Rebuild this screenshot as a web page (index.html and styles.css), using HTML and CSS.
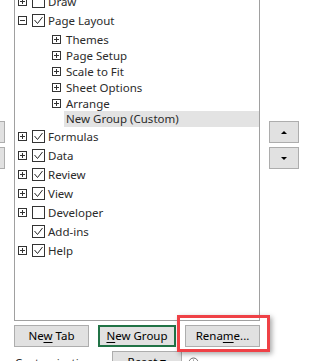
FILE: index.html
```html
<!DOCTYPE html>
<html lang="en">
<head>
  <meta charset="UTF-8">
  <meta name="viewport" content="width=device-width, initial-scale=1.0">
  <title>Customize the Ribbon</title>
  <link rel="stylesheet" href="styles.css">
</head>
<body>
  <div class="dialog">
    <div class="lists">
      <!-- Add / Remove buttons, mostly off-screen to the left -->
      <div class="move-buttons">
        <button class="btn">Add &gt;&gt;</button>
        <button class="btn">&lt;&lt; Remove</button>
      </div>

      <div class="tree-panel">
        <ul class="tree">
          <li class="tab">
            <span class="toggle"></span>
            <span class="check"></span>
            <span class="label">Draw</span>
          </li>
          <li class="tab">
            <span class="toggle open"></span>
            <span class="check"><svg width="11" height="11" viewBox="0 0 11 11"><path d="M1.5 5l3 3.5 5-6.5" fill="none" stroke="#262626"/></svg></span>
            <span class="label">Page Layout</span>
          </li>
          <li class="group first">
            <span class="toggle"></span>
            <span class="label">Themes</span>
          </li>
          <li class="group">
            <span class="toggle"></span>
            <span class="label">Page Setup</span>
          </li>
          <li class="group">
            <span class="toggle"></span>
            <span class="label">Scale to Fit</span>
          </li>
          <li class="group">
            <span class="toggle"></span>
            <span class="label">Sheet Options</span>
          </li>
          <li class="group">
            <span class="toggle"></span>
            <span class="label">Arrange</span>
          </li>
          <li class="group custom">
            <span class="label">New Group (Custom)</span>
          </li>
          <li class="tab">
            <span class="toggle"></span>
            <span class="check"><svg width="11" height="11" viewBox="0 0 11 11"><path d="M1.5 5l3 3.5 5-6.5" fill="none" stroke="#262626"/></svg></span>
            <span class="label">Formulas</span>
          </li>
          <li class="tab">
            <span class="toggle"></span>
            <span class="check"><svg width="11" height="11" viewBox="0 0 11 11"><path d="M1.5 5l3 3.5 5-6.5" fill="none" stroke="#262626"/></svg></span>
            <span class="label">Data</span>
          </li>
          <li class="tab">
            <span class="toggle"></span>
            <span class="check"><svg width="11" height="11" viewBox="0 0 11 11"><path d="M1.5 5l3 3.5 5-6.5" fill="none" stroke="#262626"/></svg></span>
            <span class="label">Review</span>
          </li>
          <li class="tab">
            <span class="toggle"></span>
            <span class="check"><svg width="11" height="11" viewBox="0 0 11 11"><path d="M1.5 5l3 3.5 5-6.5" fill="none" stroke="#262626"/></svg></span>
            <span class="label">View</span>
          </li>
          <li class="tab">
            <span class="toggle"></span>
            <span class="check"></span>
            <span class="label">Developer</span>
          </li>
          <li class="tab">
            <span class="toggle none"></span>
            <span class="check"><svg width="11" height="11" viewBox="0 0 11 11"><path d="M1.5 5l3 3.5 5-6.5" fill="none" stroke="#262626"/></svg></span>
            <span class="label">Add-ins</span>
          </li>
          <li class="tab">
            <span class="toggle"></span>
            <span class="check"><svg width="11" height="11" viewBox="0 0 11 11"><path d="M1.5 5l3 3.5 5-6.5" fill="none" stroke="#262626"/></svg></span>
            <span class="label">Help</span>
          </li>
        </ul>
      </div>

      <div class="order-buttons">
        <button class="btn btn-icon" title="Move Up"><span class="arrow up"></span></button>
        <button class="btn btn-icon" title="Move Down"><span class="arrow down"></span></button>
      </div>
    </div>

    <div class="actions">
      <button class="btn">Ne<u>w</u> Tab</button>
      <button class="btn btn-wide focused"><u>N</u>ew Group</button>
      <span class="callout">
        <button class="btn">Rena<u>m</u>e...</button>
      </span>
    </div>

    <div class="reset-row">
      <span class="reset-label">Customizations:</span>
      <button class="btn btn-reset">Re<u>s</u>et &#9662;</button>
      <span class="info">
        <svg width="11" height="11" viewBox="0 0 11 11"><circle cx="5.5" cy="5.5" r="4.5" fill="none" stroke="#6b6b6b"/><path d="M5.5 4.5v3.5M5.5 2.6v1" stroke="#6b6b6b"/></svg>
      </span>
    </div>
  </div>
</body>
</html>
```

FILE: styles.css
```css
* {
  margin: 0;
  padding: 0;
  box-sizing: border-box;
}

html,
body {
  overflow: hidden;
}

body {
  font-family: "Noto Sans", "Open Sans", sans-serif;
  font-size: 11.5px;
  color: #2b2b2b;
  background: #fff;
}

.btn {
  height: 22px;
  background: #e1e1e1;
  border: 1px solid #adadad;
  color: #000;
  font: inherit;
  line-height: 18px;
  cursor: pointer;
}

u {
  text-decoration-thickness: 1px;
  text-underline-offset: 2px;
}

/* --- list area --- */

.lists {
  display: flex;
  height: 321px;
}

.move-buttons {
  width: 5px;
  margin-right: 9px;
  padding-top: 121px;
  display: flex;
  flex-direction: column;
  align-items: flex-end;
  gap: 4px;
  overflow: hidden;
}

.move-buttons .btn {
  flex: none;
  width: 75px;
}

.tree-panel {
  width: 246px;
  border: 1px solid #a0a0a0;
  border-top: none;
  overflow: hidden;
}

.tree {
  list-style: none;
  margin-top: -8px;
}

.tab {
  height: 19px;
  display: flex;
  align-items: center;
  padding-left: 3px;
}

.group {
  height: 16px;
  display: flex;
  align-items: center;
  padding-left: 37px;
}

.group.first {
  margin-top: 1px;
}

.toggle {
  flex: none;
  width: 9px;
  height: 9px;
  border: 1px solid #333;
  background:
    linear-gradient(#333, #333) center / 5px 1px no-repeat,
    linear-gradient(#333, #333) center / 1px 5px no-repeat;
}

.toggle.open {
  background: linear-gradient(#333, #333) center / 5px 1px no-repeat;
}

.toggle.none {
  border-color: transparent;
  background: none;
}

.check {
  flex: none;
  width: 13px;
  height: 13px;
  margin-left: 5px;
  border: 1px solid #333;
  display: flex;
}

.tab .label {
  margin-left: 3px;
}

.group .label {
  margin-left: 5px;
}

.group.custom {
  padding-left: 49px;
}

.group.custom .label {
  flex: 1;
  height: 16px;
  line-height: 16px;
  margin-left: 0;
  padding-left: 2px;
  background: #e3e3e3;
}

.order-buttons {
  margin-left: 9px;
  padding-top: 121px;
  display: flex;
  flex-direction: column;
  gap: 4px;
}

.btn-icon {
  width: 30px;
  display: flex;
  align-items: center;
  justify-content: center;
}

.arrow {
  width: 0;
  height: 0;
  border-left: 3px solid transparent;
  border-right: 3px solid transparent;
}

.arrow.up {
  border-bottom: 3px solid #000;
}

.arrow.down {
  border-top: 3px solid #000;
}

/* --- buttons under the list --- */

.actions {
  display: flex;
  gap: 9px;
  margin-top: 4px;
  padding-left: 14px;
}

.actions .btn {
  width: 75px;
}

.actions .btn-wide {
  width: 78px;
}

.btn.focused {
  border: 2px solid #217346;
}

.callout {
  position: relative;
  display: flex;
}

.callout::after {
  content: '';
  position: absolute;
  top: -10px;
  left: -8px;
  right: -10px;
  bottom: -5px;
  border: 3px solid #ef4146;
  box-shadow: 2px 2px 5px rgba(0, 0, 0, 0.35);
  pointer-events: none;
}

.reset-row {
  display: flex;
  align-items: center;
  margin-top: 4px;
  padding-left: 15px;
}

.reset-label {
  width: 97px;
}

.btn-reset {
  width: 70px;
}

.info {
  display: flex;
  margin-left: 6px;
}
```
